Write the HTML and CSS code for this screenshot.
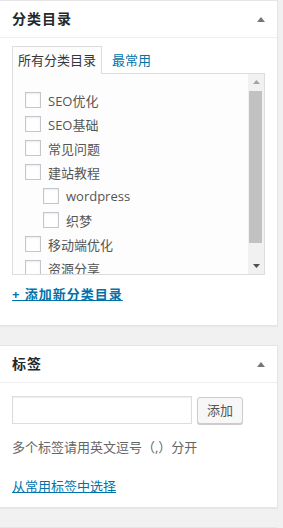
FILE: index.html
```html
<!DOCTYPE html>
<html lang="zh-CN">
<head>
<meta charset="utf-8">
<title>分类目录</title>
<link rel="stylesheet" href="styles.css">
</head>
<body>
<div class="panel">
  <div class="panel-head">
    <h2 class="panel-title">分类目录</h2>
    <svg class="toggle" width="8" height="5" viewBox="0 0 8 5"><path d="M0 5 L4 0 L8 5 Z"/></svg>
  </div>
  <div class="panel-body cat-body">
    <div class="tabs">
      <span class="tab tab-active">所有分类目录</span>
      <span class="tab tab-link">最常用</span>
    </div>
    <div class="cat-box">
      <ul class="cat-list">
        <li class="cat-item"><span class="check"></span><span>SEO优化</span></li>
        <li class="cat-item"><span class="check"></span><span>SEO基础</span></li>
        <li class="cat-item"><span class="check"></span><span>常见问题</span></li>
        <li class="cat-item"><span class="check"></span><span>建站教程</span></li>
        <li class="cat-item cat-child"><span class="check"></span><span>wordpress</span></li>
        <li class="cat-item cat-child"><span class="check"></span><span>织梦</span></li>
        <li class="cat-item"><span class="check"></span><span>移动端优化</span></li>
        <li class="cat-item"><span class="check"></span><span>资源分享</span></li>
      </ul>
      <div class="scrollbar">
        <div class="sb-btn"><svg width="7" height="4" viewBox="0 0 7 4"><path class="sb-up" d="M0 4 L3.5 0 L7 4 Z"/></svg></div>
        <div class="sb-track"><div class="sb-thumb"></div></div>
        <div class="sb-btn"><svg width="7" height="4" viewBox="0 0 7 4"><path class="sb-down" d="M0 0 L7 0 L3.5 4 Z"/></svg></div>
      </div>
    </div>
    <a class="add-link" href="#">+ 添加新分类目录</a>
  </div>
</div>

<div class="panel panel-tags">
  <div class="panel-head">
    <h2 class="panel-title">标签</h2>
    <svg class="toggle" width="8" height="5" viewBox="0 0 8 5"><path d="M0 5 L4 0 L8 5 Z"/></svg>
  </div>
  <div class="panel-body tag-body">
    <div class="tag-row">
      <input class="tag-input" type="text">
      <button class="tag-btn" type="button">添加</button>
    </div>
    <p class="tag-help">多个标签请用英文逗号（,）分开</p>
    <a class="tag-link" href="#">从常用标签中选择</a>
  </div>
</div>

<div class="panel-next"></div>
</body>
</html>
```

FILE: styles.css
```css
html, body {
  margin: 0;
  padding: 0;
  background: #f1f1f1;
  font-family: "Open Sans", "Noto Sans CJK SC", sans-serif;
  font-size: 13px;
  color: #444;
}

.panel {
  width: 277px;
  background: #fff;
  border: 1px solid #e5e5e5;
  border-left: 0;
  box-shadow: 0 1px 1px rgba(0, 0, 0, 0.04);
}

.panel-tags {
  margin-top: 19px;
}

.panel-head {
  height: 36px;
  padding: 0 12px 0 12px;
  border-bottom: 1px solid #eee;
  display: flex;
  align-items: center;
  justify-content: space-between;
}

.panel-title {
  margin: 0;
  font-size: 14px;
  font-weight: 700;
  letter-spacing: 1px;
  color: #23282d;
  line-height: 20px;
}

.toggle {
  fill: #72777c;
  display: block;
  margin-top: 1px;
}

.panel-body {
  padding: 0 12px;
}

.cat-body {
  padding-top: 8px;
  padding-bottom: 21px;
}

.tabs {
  display: flex;
  gap: 4px;
  margin-bottom: -1px;
}

.tab {
  display: block;
  height: 27px;
  line-height: 27px;
  padding: 0 5px;
  border: 1px solid transparent;
  border-bottom: 0;
  font-size: 13px;
}

.tab-active {
  border-color: #ddd;
  background: #fdfdfd;
  color: #32373c;
  position: relative;
  z-index: 1;
}

.tab-link {
  color: #0073aa;
}

.cat-box {
  display: flex;
  height: 200px;
  border: 1px solid #ddd;
  background: #fdfdfd;
}

.cat-list {
  flex: 1;
  margin: 0;
  padding: 14px 0 0 12px;
  list-style: none;
  overflow: hidden;
}

.cat-item {
  display: flex;
  align-items: center;
  gap: 7px;
  height: 24px;
  color: #555;
  font-size: 13px;
  white-space: nowrap;
}

.cat-child {
  margin-left: 18px;
}

.check {
  flex: none;
  width: 16px;
  height: 16px;
  box-sizing: border-box;
  border: 1px solid #c3c7cb;
  background: #fff;
  box-shadow: inset 0 1px 2px rgba(0, 0, 0, 0.08);
}

.scrollbar {
  width: 16px;
  flex: none;
  display: flex;
  flex-direction: column;
  background: #f1f1f1;
}

.sb-btn {
  height: 16px;
  display: flex;
  align-items: center;
  justify-content: center;
}

.sb-btn svg {
  display: block;
}

.sb-up {
  fill: #a3a3a3;
}

.sb-down {
  fill: #505050;
}

.sb-track {
  flex: 1;
  padding: 1px 2px 0 1px;
}

.sb-thumb {
  height: 152px;
  background: #c1c1c1;
}

.add-link {
  display: block;
  width: max-content;
  margin-top: 9px;
  line-height: 20px;
  font-size: 13px;
  font-weight: 700;
  letter-spacing: 1px;
  color: #0073aa;
  text-decoration: underline;
}

.tag-body {
  padding-top: 13px;
  padding-bottom: 11px;
}

.tag-row {
  display: flex;
  gap: 5px;
  align-items: flex-start;
}

.tag-input {
  width: 180px;
  height: 28px;
  box-sizing: border-box;
  margin: 0;
  border: 1px solid #ddd;
  box-shadow: inset 0 1px 2px rgba(0, 0, 0, 0.07);
  background: #fff;
  padding: 3px 5px;
  font: inherit;
}

.tag-btn {
  width: 46px;
  height: 27px;
  box-sizing: border-box;
  margin: 1px 0 0 0;
  padding: 0;
  border: 1px solid #ccc;
  border-radius: 3px;
  background: #f7f7f7;
  box-shadow: 0 1px 0 #ccc;
  color: #555;
  font-family: "Open Sans", "Noto Sans CJK SC", sans-serif;
  font-size: 13px;
  line-height: 25px;
}

.tag-help {
  margin: 14px 0 0 0;
  line-height: 19px;
  color: #666;
  font-size: 13px;
}

.tag-link {
  display: block;
  width: max-content;
  margin-top: 20px;
  line-height: 19px;
  color: #0073aa;
  text-decoration: underline;
  font-size: 13px;
}

.panel-next {
  width: 277px;
  margin-top: 19px;
  border-top: 1px solid #e5e5e5;
  height: 4px;
  background: #fff;
}
```
